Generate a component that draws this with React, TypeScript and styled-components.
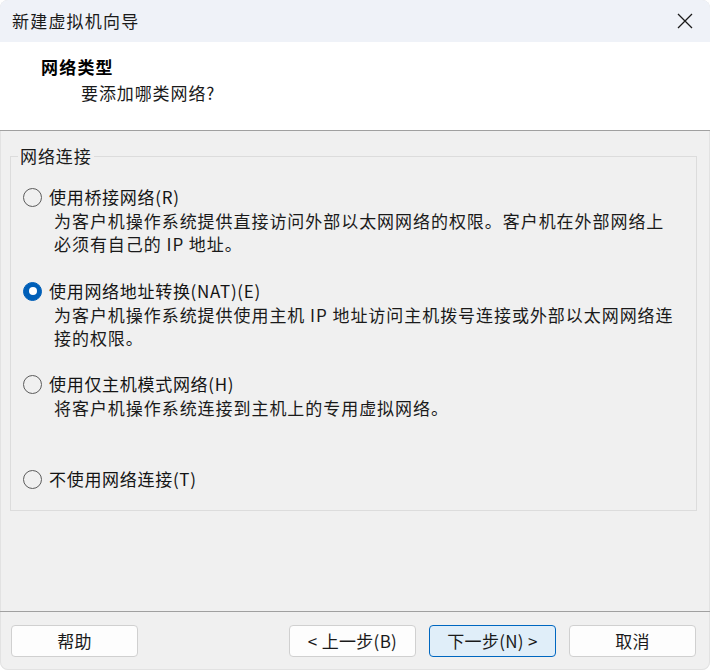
import styled, { createGlobalStyle } from "styled-components";

const GlobalStyle = createGlobalStyle`
  html, body {
    margin: 0;
    padding: 0;
    background: #ffffff;
  }
  body {
    font-family: "Noto Sans CJK SC", "Noto Sans", sans-serif;
    color: #1a1a1a;
  }
`;

const Window = styled.div`
  width: 710px;
  height: 670px;
  background: #f0f0f0;
  border-radius: 8px;
  overflow: hidden;
  display: flex;
  flex-direction: column;
  box-sizing: border-box;
  box-shadow: inset 0 0 0 1px #e2e2e2;
`;

const TitleBar = styled.div`
  height: 42px;
  flex: none;
  background: #eff2f8;
  display: flex;
  align-items: center;
  justify-content: space-between;
  padding: 0 17px 0 12px;
`;

const TitleText = styled.span`
  font-size: 17px;
  letter-spacing: 1.2px;
  color: #1a1a1a;
  line-height: 22px;
`;

const CloseButton = styled.div`
  width: 16px;
  height: 16px;
  display: flex;
  align-items: center;
  justify-content: center;
`;

const Header = styled.div`
  height: 89px;
  flex: none;
  background: #ffffff;
  border-bottom: 1px solid #a0a0a0;
  box-sizing: border-box;
  padding: 13px 0 0 41px;
`;

const HeaderTitle = styled.div`
  font-size: 17px;
  font-weight: 700;
  letter-spacing: 1.2px;
  line-height: 24px;
  color: #000;
`;

const HeaderSubtitle = styled.div`
  font-size: 17px;
  letter-spacing: 0.9px;
  line-height: 24px;
  margin: 2px 0 0 40px;
  color: #1a1a1a;
`;

const Body = styled.div`
  flex: 1;
  padding: 14px 13px 0 10px;
`;

const GroupBox = styled.fieldset`
  margin: 0;
  border: 1px solid #dcdcdc;
  padding: 18px 12px 19px 12px;
  display: flex;
  flex-direction: column;
`;

const GroupLegend = styled.legend`
  margin-left: -5px;
  padding: 0 2px;
  font-size: 17px;
  line-height: 22px;
  letter-spacing: 0.9px;
  color: #1a1a1a;
`;

const Option = styled.div<{ $gap: number }>`
  display: flex;
  flex-direction: column;
  margin-bottom: ${(p) => p.$gap}px;
  &:last-child {
    margin-bottom: 0;
  }
`;

const OptionRow = styled.label`
  display: flex;
  align-items: center;
  gap: 7px;
  height: 24px;
`;

const Radio = styled.span<{ $checked?: boolean }>`
  width: 19px;
  height: 19px;
  border-radius: 50%;
  box-sizing: border-box;
  flex: none;
  display: flex;
  align-items: center;
  justify-content: center;
  background: ${(p) => (p.$checked ? "#005fb8" : "transparent")};
  border: 1px solid ${(p) => (p.$checked ? "#005fb8" : "#5c5c5c")};
  &::after {
    content: "";
    display: ${(p) => (p.$checked ? "block" : "none")};
    width: 8px;
    height: 8px;
    border-radius: 50%;
    background: #ffffff;
  }
`;

const OptionLabel = styled.span`
  font-size: 17px;
  letter-spacing: 0.7px;
  line-height: 24px;
  color: #141414;
`;

const OptionDesc = styled.div`
  padding-left: 31px;
  font-size: 17px;
  letter-spacing: 0.95px;
  line-height: 23px;
  color: #1a1a1a;
`;

const Footer = styled.div`
  flex: none;
  border-top: 1px solid #a0a0a0;
  padding: 13px 14px 13px 11px;
  display: flex;
  align-items: center;
`;

const ButtonGroup = styled.div`
  margin-left: auto;
  display: flex;
  gap: 13px;
`;

const Button = styled.button<{ $primary?: boolean }>`
  width: 127px;
  height: 32px;
  box-sizing: border-box;
  border-radius: 4px;
  border: 1px solid ${(p) => (p.$primary ? "#0067c0" : "#d0d0d0")};
  background: ${(p) => (p.$primary ? "#e0eef9" : "#fdfdfd")};
  font-family: "Noto Sans CJK SC", "Noto Sans", sans-serif;
  font-size: 17px;
  line-height: 22px;
  letter-spacing: 0.3px;
  color: #1a1a1a;
  padding: 0;
  display: flex;
  align-items: center;
  justify-content: center;
  white-space: pre;
`;

const options = [
  {
    label: "使用桥接网络(R)",
    desc: [
      "为客户机操作系统提供直接访问外部以太网网络的权限。客户机在外部网络上",
      "必须有自己的 IP 地址。",
    ],
    gap: 24,
  },
  {
    label: "使用网络地址转换(NAT)(E)",
    desc: [
      "为客户机操作系统提供使用主机 IP 地址访问主机拨号连接或外部以太网网络连",
      "接的权限。",
    ],
    checked: true,
    gap: 23,
  },
  {
    label: "使用仅主机模式网络(H)",
    desc: ["将客户机操作系统连接到主机上的专用虚拟网络。"],
    gap: 48,
  },
  {
    label: "不使用网络连接(T)",
    desc: [],
    gap: 0,
  },
];

const App: React.FC = () => {
  return (
    <>
      <GlobalStyle />
      <Window>
        <TitleBar>
          <TitleText>新建虚拟机向导</TitleText>
          <CloseButton>
            <svg width="16" height="16" viewBox="0 0 16 16">
              <path
                d="M1 1 L15 15 M15 1 L1 15"
                stroke="#1a1a1a"
                strokeWidth="1.3"
                fill="none"
              />
            </svg>
          </CloseButton>
        </TitleBar>
        <Header>
          <HeaderTitle>网络类型</HeaderTitle>
          <HeaderSubtitle>要添加哪类网络?</HeaderSubtitle>
        </Header>
        <Body>
          <GroupBox>
            <GroupLegend>网络连接</GroupLegend>
            {options.map((opt) => (
              <Option key={opt.label} $gap={opt.gap}>
                <OptionRow>
                  <Radio $checked={opt.checked} />
                  <OptionLabel>{opt.label}</OptionLabel>
                </OptionRow>
                {opt.desc.map((line) => (
                  <OptionDesc key={line}>{line}</OptionDesc>
                ))}
              </Option>
            ))}
          </GroupBox>
        </Body>
        <Footer>
          <Button>帮助</Button>
          <ButtonGroup>
            <Button>{"< 上一步(B)"}</Button>
            <Button $primary>{"下一步(N) >"}</Button>
            <Button>取消</Button>
          </ButtonGroup>
        </Footer>
      </Window>
    </>
  );
};

export default App;
